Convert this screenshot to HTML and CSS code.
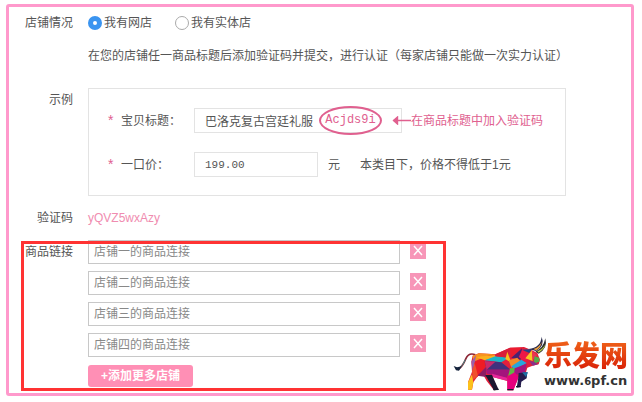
FILE: index.html
```html
<!DOCTYPE html>
<html lang="zh-CN">
<head>
    <meta charset="UTF-8">
    <meta name="viewport" content="width=device-width, initial-scale=1.0">
    <title>店铺认证</title>
    <link rel="stylesheet" href="styles.css">
</head>
<body>
    <form class="panel">
        <div class="row shop-type">
            <span class="label" id="shop-type">店铺情况</span>
            <div class="radios" role="radiogroup" aria-labelledby="shop-type">
                <label><input type="radio" name="shop" checked>我有网店</label>
                <label><input type="radio" name="shop">我有实体店</label>
            </div>
        </div>

        <div class="row intro">
            <p>在您的店铺任一商品标题后添加验证码并提交，进行认证（每家店铺只能做一次实力认证）</p>
        </div>

        <div class="row sample-row">
            <span class="label">示例</span>
            <div class="sample">
                <div class="sample-line">
                    <label for="title"><span class="star">*</span>宝贝标题：</label>
                    <div class="title-field">
                        <input type="text" id="title" value="巴洛克复古宫廷礼服">
                        <span class="code-mark">Acjds9i</span>
                    </div>
                    <span class="tip">
                        <svg width="19" height="9" viewBox="0 0 19 9"><path d="M1 4.5h18M5.5 1L1.5 4.5l4 3.5z" fill="#e0608f" stroke="#e0608f" stroke-width="1.4"/></svg>在商品标题中加入验证码
                    </span>
                </div>
                <div class="sample-line">
                    <label for="price"><span class="star">*</span>一口价：</label>
                    <input type="text" id="price" class="price" value="199.00">
                    <span class="unit">元</span>
                    <span class="note">本类目下，价格不得低于1元</span>
                </div>
            </div>
        </div>

        <div class="row verify">
            <span class="label">验证码</span>
            <span class="verify-code">yQVZ5wxAzy</span>
        </div>

        <div class="row links">
            <span class="label" id="links">商品链接</span>
            <div class="link-list" role="group" aria-labelledby="links">
                <div class="link-item">
                    <input type="text" aria-label="店铺一" placeholder="店铺一的商品连接">
                    <button type="button" class="remove" aria-label="删除"><svg viewBox="0 0 16 17"><path d="M4 4l8 9M12 4l-8 9"/></svg></button>
                </div>
                <div class="link-item">
                    <input type="text" aria-label="店铺二" placeholder="店铺二的商品连接">
                    <button type="button" class="remove" aria-label="删除"><svg viewBox="0 0 16 17"><path d="M4 4l8 9M12 4l-8 9"/></svg></button>
                </div>
                <div class="link-item">
                    <input type="text" aria-label="店铺三" placeholder="店铺三的商品连接">
                    <button type="button" class="remove" aria-label="删除"><svg viewBox="0 0 16 17"><path d="M4 4l8 9M12 4l-8 9"/></svg></button>
                </div>
                <div class="link-item">
                    <input type="text" aria-label="店铺四" placeholder="店铺四的商品连接">
                    <button type="button" class="remove" aria-label="删除"><svg viewBox="0 0 16 17"><path d="M4 4l8 9M12 4l-8 9"/></svg></button>
                </div>
                <button type="button" class="add">+添加更多店铺</button>
            </div>
        </div>

        <div class="logo">
            <svg class="bull" width="94" height="57" viewBox="0 30 282 171">
                <!-- tail -->
                <path d="M76 89Q56 82 48 100Q38 124 26 132" fill="none" stroke="#8c2333" stroke-width="5"/>
                <path d="M46 104Q40 120 28 130" fill="none" stroke="#3d8f8a" stroke-width="3"/>
                <path d="M11 123l10 4 14-3-8 13-9-1z" fill="#14233c"/>
                <!-- body -->
                <path d="M68 92L86 85 136 88 180 68 222 66 246 76 262 84 270 104 266 118 248 122 232 128 226 148 206 156 190 196 172 196 172 168 128 156 144 194 132 196 110 168 100 150 84 152 70 172 66 194 54 194 54 172 66 140 64 110z" fill="#e2203c"/>
                <path d="M68 92l20-7 48 3-22 4-44 18z" fill="#f7931e"/>
                <path d="M64 110l14-20-4 26-6 22z" fill="#9c5fa8"/>
                <path d="M74 112l30-14 4 24-26 34-12 0z" fill="#ee1c24"/>
                <path d="M66 138l8-24 10 38-14 12z" fill="#f0502c"/>
                <path d="M54 172l12-24 4 24-4 22-12 0z" fill="#fcc21b"/>
                <path d="M82 152l26-26 0 30z" fill="#8c1c63"/>
                <path d="M78 96l56 -6 4 8-34 8z" fill="#fbb11c"/>
                <path d="M104 106l32-12 40 4-22 14z" fill="#1cb5c9"/>
                <path d="M136 88l44-20-4 30-38-4z" fill="#d81f3a"/>
                <path d="M104 108l50 4 28 22-72 0z" fill="#40317e"/>
                <path d="M104 108l32 2-26 24z" fill="#c92a6b"/>
                <path d="M108 134l74 0-12 24-60-12z" fill="#a4147c"/>
                <path d="M126 146l44 12 4 10-46-12z" fill="#e6269a"/>
                <path d="M106 150l20 0 20 44-14 2z" fill="#1b1730"/>
                <path d="M180 68l40 0-36 32z" fill="#ec1c30"/>
                <path d="M172 80l12 34-18-12z" fill="#f7c31d"/>
                <path d="M184 98l32-28-4 34z" fill="#4a2372"/>
                <path d="M176 106l26-8 12 14-30 16z" fill="#f48c28"/>
                <path d="M184 124l30-20 16 10-36 20z" fill="#27a7dc"/>
                <path d="M180 130l18-2-4 24-22 12z" fill="#62b645"/>
                <path d="M194 130l36-14-6 30-32 4z" fill="#a31580"/>
                <path d="M172 154l22-12 12 14-16 40-18 0z" fill="#e6007e"/>
                <path d="M206 96l12-24 18 24-10 14z" fill="#ed1848"/>
                <path d="M216 74l30-2-8 12z" fill="#1f4489"/>
                <path d="M226 100l20-24 2 32z" fill="#f9c423"/>
                <path d="M246 78l16 12-14 16z" fill="#e83554"/>
                <path d="M254 94l14 4 0 12-18 6z" fill="#55ac4c"/>
                <path d="M238 108l14 2 12 8-16 4z" fill="#8a2f88"/>
                <path d="M206 144l26-2-2 18-16 10-2 16-12 2 4-24z" fill="#241b4d"/>
                <path d="M216 142l18 0-6 14z" fill="#1d6fa5"/>
                <path d="M130 194l16-1M198 185l14 0M172 194l18 0" stroke="#14182c" stroke-width="4"/>
                <!-- horns -->
                <path d="M236 72Q272 68 275 35Q286 62 258 78z" fill="#26284c"/>
                <path d="M250 72Q270 66 275 50Q274 66 258 76z" fill="#f0a23c"/>
                <path d="M256 80Q280 70 286 40Q294 70 266 86z" fill="#2c2e30"/>
                <path d="M262 79Q280 72 286 58Q284 72 266 83z" fill="#b9d34a"/>
            </svg>
            <div class="logo-text">
                <span class="logo-name">乐发网</span>
                <span class="logo-url">www.<small>6</small>pf.cn</span>
            </div>
        </div>
    </form>
</body>
</html>
```
FILE: styles.css
```css
* {
    box-sizing: border-box;
}
body {
    margin: 0;
    font-family: "Liberation Sans", "Noto Sans CJK SC", sans-serif;
    font-size: 12px;
    line-height: 16px;
    color: #555;
    background-color: #fff;
}
p {
    margin: 0;
}
input, button {
    font: inherit;
    color: inherit;
    margin: 0;
}
.panel {
    position: relative;
    margin: 4px 8px 6px 6px;
    padding: 8px 0 2px;
    border: 3px solid #ff99cc;
    border-radius: 3px;
}
.row {
    display: flex;
    gap: 15px;
}
.label {
    width: 64px;
    flex: none;
    text-align: right;
}
.radios {
    display: flex;
    gap: 23px;
}
.radios label {
    display: flex;
    align-items: center;
    gap: 2px;
}
.radios input {
    appearance: none;
    width: 14px;
    height: 14px;
    border: 1px solid #aaa;
    border-radius: 50%;
    background-color: #fff;
}
.radios input:checked {
    border: 5px solid #3a94f0;
}
.intro {
    margin-top: 17px;
    padding-left: 79px;
}
.sample-row {
    margin-top: 24px;
}
.sample-row .label {
    padding-top: 4px;
}
.sample {
    width: 478px;
    padding: 19px 0 18px 19px;
    border: 1px solid #e3e3e3;
    display: flex;
    flex-direction: column;
    gap: 19px;
}
.sample-line {
    display: flex;
    align-items: center;
}
.sample-line label {
    width: 86px;
}
.sample-line input {
    width: 100%;
    height: 25px;
    padding: 0 10px;
    border: 1px solid #e3e3e3;
    background-color: #fff;
}
.star {
    display: inline-block;
    width: 13px;
    font-size: 14px;
    color: #e0608f;
}
.title-field {
    position: relative;
    width: 208px;
}
.code-mark {
    position: absolute;
    top: -2px;
    right: 20px;
    width: 63px;
    height: 29px;
    border: 2px solid #e0608f;
    border-radius: 50%;
    font-family: "Liberation Mono", monospace;
    line-height: 25px;
    text-align: center;
    color: #e0608f;
}
.tip {
    display: flex;
    align-items: center;
    margin-left: -10px;
    z-index: 1;
    color: #e0608f;
}
.sample-line .price {
    width: 124px;
    font-family: "Liberation Mono", monospace;
    font-size: 11px;
}
.unit {
    margin-left: 10px;
}
.note {
    margin-left: 20px;
}
.verify {
    margin-top: 14px;
}
.verify-code {
    color: #f08cb0;
}
.links {
    position: relative;
    margin-top: 14px;
    padding-bottom: 4px;
}
.links .label {
    padding-top: 4px;
}
/* highlight around the link fields */
.links::after {
    content: "";
    position: absolute;
    top: 1px;
    bottom: 0;
    left: 12px;
    width: 419px;
    border: 3px solid #ff3333;
    pointer-events: none;
}
.link-list {
    display: flex;
    flex-direction: column;
    align-items: flex-start;
    gap: 7px;
}
.link-item {
    display: flex;
    align-items: flex-start;
    gap: 10px;
}
.link-item input {
    width: 312px;
    height: 24px;
    padding: 0 5px;
    border: 1px solid #c8c8c8;
}
.link-item input::placeholder {
    color: #888;
}
.remove {
    width: 16px;
    height: 17px;
    margin-top: 2px;
    padding: 0;
    border: none;
    background-color: #f796b8;
    cursor: pointer;
}
.remove svg {
    display: block;
    fill: none;
    stroke: #fff;
    stroke-width: 1.5;
}
.add {
    height: 22px;
    margin-top: 1px;
    padding: 0 13px;
    border: none;
    border-radius: 3px;
    background-color: #ff8fb5;
    color: #fff;
    font-weight: bold;
    cursor: pointer;
}
.logo {
    position: absolute;
    right: 0;
    bottom: 1px;
    display: flex;
    align-items: flex-end;
}
.bull {
    overflow: visible;
}
.logo-text {
    display: flex;
    flex-direction: column;
    width: 87px;
}
.logo-name {
    font-family: "Noto Sans CJK SC", sans-serif;
    font-size: 28px;
    font-weight: 900;
    line-height: 34px;
    color: transparent;
    background-image: linear-gradient(#f26a1b, #d81e06);
    background-clip: text;
}
.logo-url {
    font-family: "DejaVu Sans", sans-serif;
    font-size: 13px;
    font-weight: bold;
    line-height: 20px;
    color: #333;
}
.logo-url small {
    font-size: 10px;
}
```
